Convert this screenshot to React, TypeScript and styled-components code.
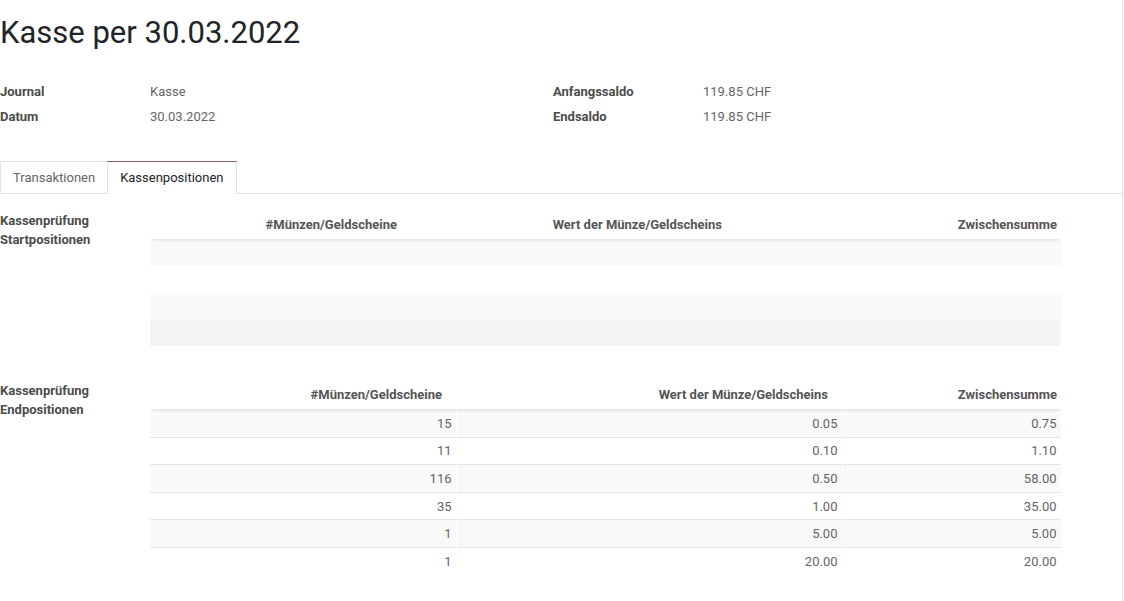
import React from "react";
import styled, { createGlobalStyle } from "styled-components";

const Global = createGlobalStyle`
  html, body { margin: 0; padding: 0; background: #fff; }
  body { font-family: Roboto, "Noto Sans", Arial, sans-serif; font-size: 13px; color: #666; }
  * { box-sizing: border-box; }
`;

const Sheet = styled.div`
  width: 1123px;
  min-height: 601px;
  border-right: 1px solid #dee2e6;
  padding-top: 15px;
`;

const Title = styled.h1`
  margin: 0;
  font-size: 31px;
  line-height: 36px;
  font-weight: 400;
  color: #212529;
`;

const Groups = styled.div`
  display: grid;
  grid-template-columns: 553px 1fr;
  margin-top: 27.5px;
`;

const Group = styled.div`
  display: flex;
  flex-direction: column;
`;

const FieldRow = styled.div`
  display: grid;
  grid-template-columns: 150px 1fr;
  height: 25px;
  align-items: center;
`;

const Label = styled.span`
  font-weight: 700;
  color: #4c4c4c;
`;

const Value = styled.span`
  color: #666;
`;

const TabBar = styled.div`
  display: flex;
  margin-top: 32.5px;
  border-bottom: 1px solid #dee2e6;
  height: 33px;
`;

const Tab = styled.div<{ $active?: boolean }>`
  padding: 0 12px;
  height: 33px;
  line-height: 31px;
  border: 1px solid #dee2e6;
  border-top: 1px solid ${(p) => (p.$active ? "#7c5b74" : "#dee2e6")};
  border-bottom: 1px solid ${(p) => (p.$active ? "#fff" : "#dee2e6")};
  color: ${(p) => (p.$active ? "#212529" : "#666")};
  background: #fff;
  margin-left: ${(p) => (p.$active ? "-1px" : "0")};
`;

const Content = styled.div`
  padding-top: 16px;
`;

const Section = styled.div<{ $gap?: number }>`
  display: grid;
  grid-template-columns: 150px 911px;
  margin-bottom: ${(p) => p.$gap ?? 0}px;
`;

const SectionLabel = styled.div`
  font-weight: 700;
  color: #4c4c4c;
  line-height: 19px;
  padding-top: 0.5px;
`;

const Table = styled.div`
  display: flex;
  flex-direction: column;
`;

const HeadRow = styled.div<{ $cols: string; $gap: number }>`
  display: grid;
  grid-template-columns: ${(p) => p.$cols};
  column-gap: ${(p) => p.$gap}px;
  height: 29px;
  align-items: center;
  position: relative;
  z-index: 1;
  box-shadow: 0 3px 3px -2px rgba(0, 0, 0, 0.12);
  background: #fff;
`;

const HeadCell = styled.div<{ $pad: number }>`
  text-align: right;
  padding-right: ${(p) => p.$pad}px;
  font-weight: 700;
  color: #555;
  white-space: nowrap;
`;

const BodyRow = styled.div<{ $cols: string; $gap: number; $h: number }>`
  display: grid;
  grid-template-columns: ${(p) => p.$cols};
  column-gap: ${(p) => p.$gap}px;
  height: ${(p) => p.$h}px;
  background: #fff;
`;

const Cell = styled.div<{ $bg: string; $border: boolean }>`
  background: ${(p) => p.$bg};
  border-top: 1px solid ${(p) => (p.$border ? "#e2e4e9" : "transparent")};
  padding-right: 4.5px;
  display: flex;
  align-items: center;
  justify-content: flex-end;
  color: #666;
`;

const startBgs = ["#f9f9f9", "#ffffff", "#fafafa", "#f4f4f4"];

const endRows = [
  ["15", "0.05", "0.75"],
  ["11", "0.10", "1.10"],
  ["116", "0.50", "58.00"],
  ["35", "1.00", "35.00"],
  ["1", "5.00", "5.00"],
  ["1", "20.00", "20.00"],
];

const headers = ["#Münzen/Geldscheine", "Wert der Münze/Geldscheins", "Zwischensumme"];

export default function App() {
  const startCols = "260px 325px 1fr";
  const endCols = "306px 385px 1fr";
  return (
    <>
      <Global />
      <Sheet>
        <Title>Kasse per 30.03.2022</Title>
        <Groups>
          <Group>
            <FieldRow>
              <Label>Journal</Label>
              <Value>Kasse</Value>
            </FieldRow>
            <FieldRow>
              <Label>Datum</Label>
              <Value>30.03.2022</Value>
            </FieldRow>
          </Group>
          <Group>
            <FieldRow>
              <Label>Anfangssaldo</Label>
              <Value>119.85 CHF</Value>
            </FieldRow>
            <FieldRow>
              <Label>Endsaldo</Label>
              <Value>119.85 CHF</Value>
            </FieldRow>
          </Group>
        </Groups>
        <TabBar>
          <Tab>Transaktionen</Tab>
          <Tab $active>Kassenpositionen</Tab>
        </TabBar>
        <Content>
          <Section $gap={34}>
            <SectionLabel>
              Kassenprüfung
              <br />
              Startpositionen
            </SectionLabel>
            <Table>
              <HeadRow $cols={startCols} $gap={0}>
                {headers.map((h, i) => (
                  <HeadCell key={h} $pad={i === 2 ? 4 : 13}>
                    {h}
                  </HeadCell>
                ))}
              </HeadRow>
              {startBgs.map((bg, r) => (
                <BodyRow key={r} $cols={startCols} $gap={0} $h={r === 0 ? 27 : 26.7}>
                  {[0, 1, 2].map((c) => (
                    <Cell key={c} $bg={bg} $border={false} />
                  ))}
                </BodyRow>
              ))}
            </Table>
          </Section>
          <Section>
            <SectionLabel>
              Kassenprüfung
              <br />
              Endpositionen
            </SectionLabel>
            <Table>
              <HeadRow $cols={endCols} $gap={1}>
                {headers.map((h, i) => (
                  <HeadCell key={h} $pad={i === 2 ? 4 : 14}>
                    {h}
                  </HeadCell>
                ))}
              </HeadRow>
              {endRows.map((row, r) => (
                <BodyRow key={r} $cols={endCols} $gap={1} $h={27.6}>
                  {row.map((v, c) => (
                    <Cell key={c} $bg={r % 2 === 0 ? "#f9f9f9" : "#ffffff"} $border={r > 0}>
                      {v}
                    </Cell>
                  ))}
                </BodyRow>
              ))}
            </Table>
          </Section>
        </Content>
      </Sheet>
    </>
  );
}
